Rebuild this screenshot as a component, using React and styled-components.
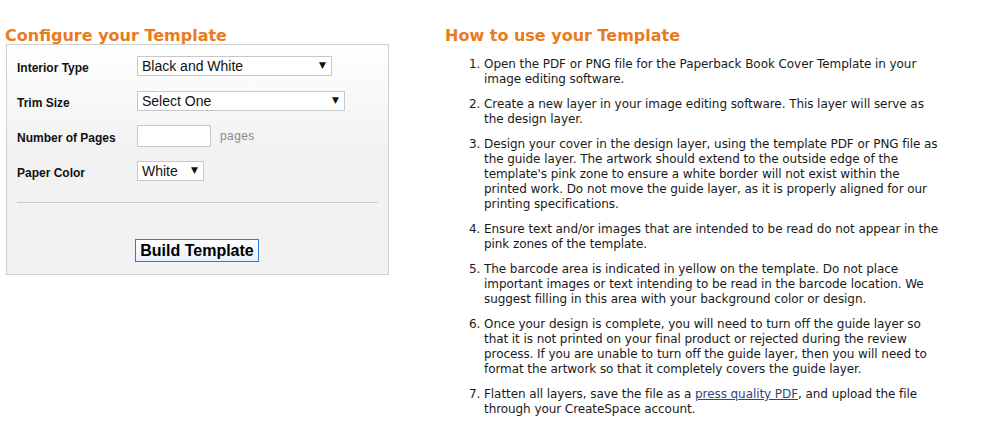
import React from "react";
import styled, { createGlobalStyle } from "styled-components";

const GlobalStyle = createGlobalStyle`
  body {
    margin: 0;
    background: #fff;
    font-family: "Liberation Sans", Arial, sans-serif;
  }
`;

const steps = [
  "Open the PDF or PNG file for the Paperback Book Cover Template in your image editing software.",
  "Create a new layer in your image editing software. This layer will serve as the design layer.",
  "Design your cover in the design layer, using the template PDF or PNG file as the guide layer. The artwork should extend to the outside edge of the template's pink zone to ensure a white border will not exist within the printed work. Do not move the guide layer, as it is properly aligned for our printing specifications.",
  "Ensure text and/or images that are intended to be read do not appear in the pink zones of the template.",
  "The barcode area is indicated in yellow on the template. Do not place important images or text intending to be read in the barcode location. We suggest filling in this area with your background color or design.",
  "Once your design is complete, you will need to turn off the guide layer so that it is not printed on your final product or rejected during the review process. If you are unable to turn off the guide layer, then you will need to format the artwork so that it completely covers the guide layer.",
];

const App = () => {
  return (
    <Page>
      <GlobalStyle />
      <LeftColumn>
        <Heading>Configure your Template</Heading>
        <FormBox>
          <Row>
            <Label>Interior Type</Label>
            <SelectWrap width={195}>
              <Select defaultValue="bw">
                <option value="bw">Black and White</option>
                <option value="color">Full Color</option>
              </Select>
              <Arrow>▼</Arrow>
            </SelectWrap>
          </Row>
          <Row>
            <Label>Trim Size</Label>
            <SelectWrap width={208}>
              <Select defaultValue="">
                <option value="">Select One</option>
              </Select>
              <Arrow>▼</Arrow>
            </SelectWrap>
          </Row>
          <Row>
            <Label>Number of Pages</Label>
            <PagesInput type="text" />
            <Hint>pages</Hint>
          </Row>
          <Row last>
            <Label>Paper Color</Label>
            <SelectWrap width={67}>
              <Select defaultValue="white">
                <option value="white">White</option>
                <option value="cream">Cream</option>
              </Select>
              <Arrow>▼</Arrow>
            </SelectWrap>
          </Row>
          <Divider />
          <ButtonRow>
            <BuildButton type="button">Build Template</BuildButton>
          </ButtonRow>
        </FormBox>
      </LeftColumn>

      <RightColumn>
        <Heading>How to use your Template</Heading>
        <Steps>
          {steps.map((s) => (
            <Step key={s}>{s}</Step>
          ))}
          <Step>
            Flatten all layers, save the file as a{" "}
            <StepLink href="#">press quality PDF</StepLink>, and upload the file
            through your CreateSpace account.
          </Step>
        </Steps>
      </RightColumn>
    </Page>
  );
};

export default App;

const Page = styled.div`
  display: flex;
  align-items: flex-start;
  padding: 24px 0 0 5px;
`;

const LeftColumn = styled.div`
  width: 384px;
  display: flex;
  flex-direction: column;
`;

const RightColumn = styled.div`
  margin-left: 56px;
  width: 497px;
`;

const Heading = styled.h2`
  margin: 0;
  padding-top: 4px;
  font-family: "DejaVu Sans", Verdana, sans-serif;
  font-size: 16px;
  line-height: 16px;
  font-weight: bold;
  color: #ea7b1c;
`;

const FormBox = styled.div`
  margin: 0 0 0 1px;
  height: 231px;
  box-sizing: border-box;
  border: 1px solid #cfcfcf;
  background: linear-gradient(#ffffff, #f2f2f2 45%);
  padding: 10px 10px 0 10px;
`;

const Row = styled.div`
  display: flex;
  align-items: center;
  height: 22px;
  margin-bottom: ${(p) => (p.last ? "0" : "13px")};
`;

const Label = styled.label`
  width: 120px;
  font-size: 12px;
  font-weight: bold;
  color: #111;
  padding-top: 4px;
`;

const SelectWrap = styled.div`
  position: relative;
  width: ${(p) => p.width}px;
  height: 20px;
`;

const Select = styled.select`
  appearance: none;
  -webkit-appearance: none;
  width: 100%;
  height: 20px;
  box-sizing: border-box;
  border: 1px solid #c8c8c8;
  border-radius: 0;
  background: #fff;
  padding: 0 18px 1px 4px;
  font-family: "Liberation Sans", Arial, sans-serif;
  font-size: 14px;
  color: #111;
  outline: none;
`;

const Arrow = styled.span`
  position: absolute;
  right: 6px;
  top: 4px;
  font-family: "DejaVu Sans", sans-serif;
  font-size: 9px;
  color: #111;
  pointer-events: none;
`;

const PagesInput = styled.input`
  width: 74px;
  height: 22px;
  box-sizing: border-box;
  border: 1px solid #c8c8c8;
  background: #fff;
  margin: 0;
  padding: 0 4px;
`;

const Hint = styled.span`
  margin-left: 9px;
  font-size: 12px;
  letter-spacing: 0.4px;
  color: #8a8a8a;
`;

const Divider = styled.hr`
  margin: 20px 0 0 0;
  border: none;
  border-top: 1px solid #cccccc;
`;

const ButtonRow = styled.div`
  display: flex;
  padding: 36px 0 0 118px;
`;

const BuildButton = styled.button`
  width: 124px;
  height: 23px;
  box-sizing: border-box;
  border: 1px solid #2f7ad8;
  background: linear-gradient(#ffffff, #e6f0fc);
  font-family: "Liberation Sans", Arial, sans-serif;
  font-size: 16px;
  font-weight: bold;
  color: #000;
  padding: 0;
  cursor: pointer;
`;

const Steps = styled.ol`
  margin: 13px 0 0 0;
  padding-left: 39px;
  font-family: "DejaVu Sans", Verdana, Tahoma, sans-serif;
  font-size: 12px;
  letter-spacing: -0.07px;
  line-height: 15px;
  color: #1a1a1a;
`;

const Step = styled.li`
  margin-bottom: 10px;
`;

const StepLink = styled.a`
  color: #2d4a7e;
  text-decoration: underline;
`;
